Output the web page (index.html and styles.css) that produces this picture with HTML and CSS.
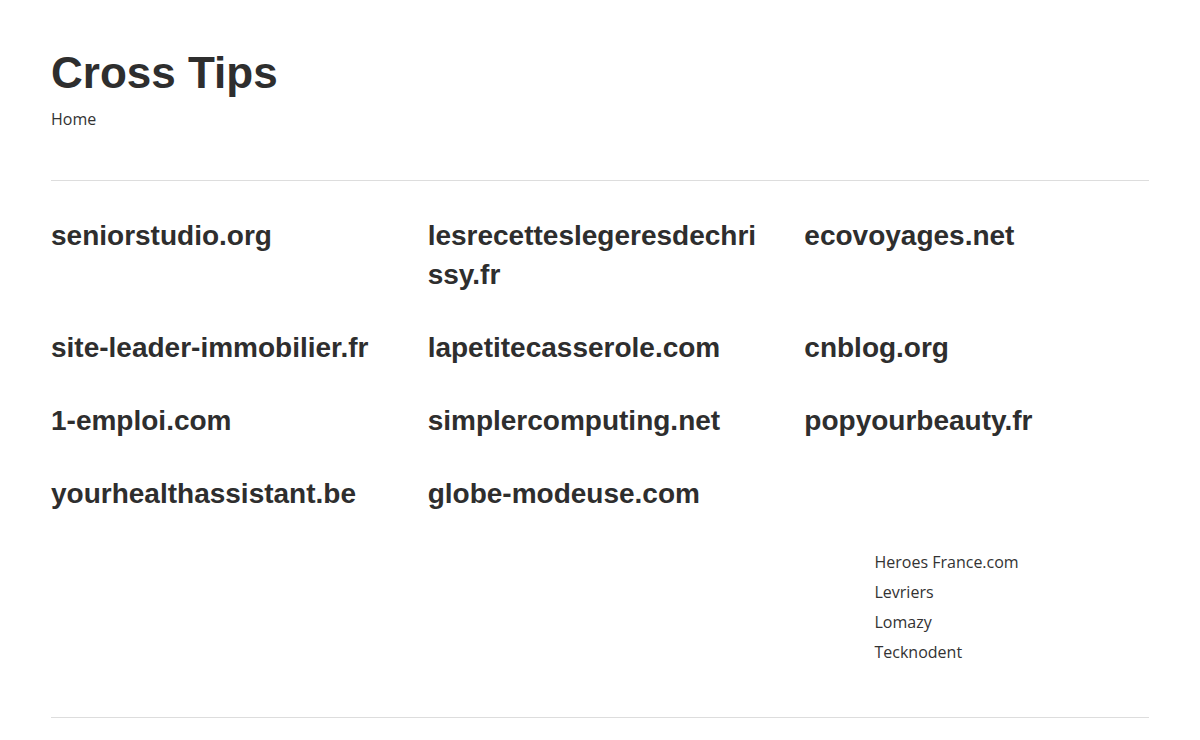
FILE: index.html
```html
<!DOCTYPE html>
<html lang="fr">
<head>
<meta charset="utf-8">
<title>Cross Tips</title>
<link rel="stylesheet" href="styles.css">
</head>
<body>
<div class="page">
  <header class="site-header">
    <h1 class="site-title">Cross Tips</h1>
    <nav class="breadcrumb"><a href="#">Home</a></nav>
  </header>
  <main class="sites">
    <a class="site" href="#">seniorstudio.org</a>
    <a class="site" href="#">lesrecetteslegeresdechrissy.fr</a>
    <a class="site" href="#">ecovoyages.net</a>
    <a class="site" href="#">site-leader-immobilier.fr</a>
    <a class="site" href="#">lapetitecasserole.com</a>
    <a class="site" href="#">cnblog.org</a>
    <a class="site" href="#">1-emploi.com</a>
    <a class="site" href="#">simplercomputing.net</a>
    <a class="site" href="#">popyourbeauty.fr</a>
    <a class="site" href="#">yourhealthassistant.be</a>
    <a class="site" href="#">globe-modeuse.com</a>
  </main>
  <footer class="site-footer">
    <div class="footer-col"></div>
    <div class="footer-col"></div>
    <div class="footer-col"></div>
    <ul class="footer-links">
      <li><a href="#">Heroes France.com</a></li>
      <li><a href="#">Levriers</a></li>
      <li><a href="#">Lomazy</a></li>
      <li><a href="#">Tecknodent</a></li>
    </ul>
  </footer>
</div>
</body>
</html>
```

FILE: styles.css
```css
html, body {
  margin: 0;
  padding: 0;
  background: #ffffff;
  color: #333333;
}

.page {
  padding: 0 51px;
}

a {
  color: inherit;
  text-decoration: none;
}

.site-header {
  padding-top: 46px;
  padding-bottom: 49px;
  border-bottom: 1px solid #dddddd;
}

.site-title {
  margin: 0;
  font-family: "Liberation Sans", Arial, sans-serif;
  font-weight: 700;
  font-size: 44px;
  line-height: 53px;
  color: #2e2e2e;
}

.breadcrumb {
  margin-top: 8px;
  font-family: "Open Sans", "Noto Sans", sans-serif;
  font-size: 16px;
  line-height: 24px;
  color: #333333;
}

.sites {
  display: grid;
  grid-template-columns: repeat(3, 1fr);
  column-gap: 32px;
  row-gap: 34px;
  padding-top: 35px;
}

.site {
  padding-right: 12px;
  font-family: "Liberation Sans", Arial, sans-serif;
  font-weight: 700;
  font-size: 28px;
  line-height: 39px;
  color: #2e2e2e;
  overflow-wrap: anywhere;
  word-break: break-all;
}

.site-footer {
  display: grid;
  grid-template-columns: repeat(4, 1fr);
  padding-top: 34px;
  padding-bottom: 50px;
  border-bottom: 1px solid #dddddd;
}

.footer-links {
  list-style: none;
  margin: 0;
  padding: 0;
  font-family: "Open Sans", "Noto Sans", sans-serif;
  font-size: 16px;
  line-height: 30px;
  color: #333333;
}
```
